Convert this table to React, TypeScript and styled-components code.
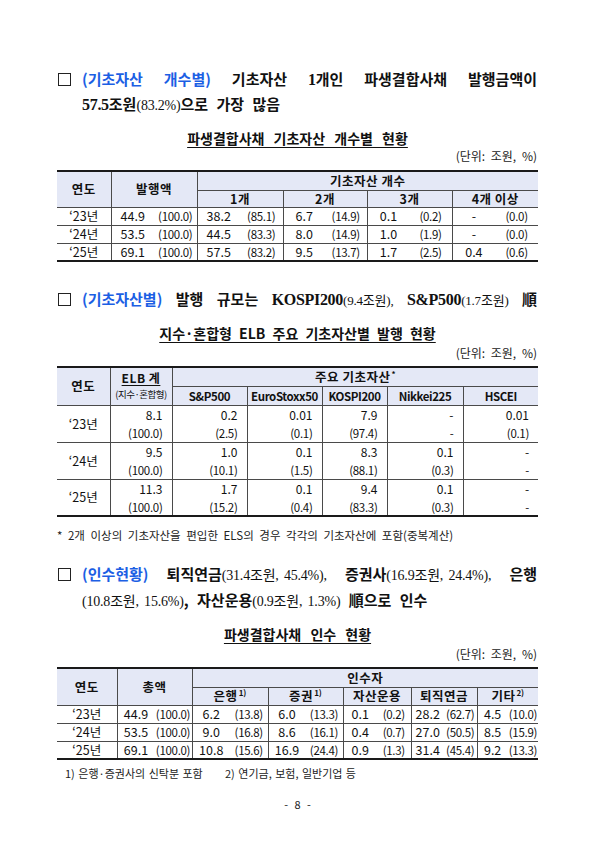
import React from 'react'
import styled, { createGlobalStyle } from 'styled-components'

const GlobalStyle = createGlobalStyle`
  html, body {
    margin: 0;
    padding: 0;
    background: #fff;
  }
  body {
    font-family: 'Noto Sans CJK KR', 'Noto Sans', sans-serif;
    color: #111;
  }
`

const Page = styled.div`
  width: 595px;
  min-height: 841px;
  box-sizing: border-box;
  padding: 0 57px;
  display: flex;
  flex-direction: column;
`

const Heading = styled.div<{ $mt: number; $lh: number }>`
  display: flex;
  margin-top: ${p => p.$mt}px;
  font-size: 15px;
  line-height: ${p => p.$lh}px;
  font-weight: 700;
  color: #111;
`

const BulletBox = styled.div`
  flex: none;
  width: 25px;
`

const Square = styled.span`
  display: inline-block;
  width: 13px;
  height: 13px;
  box-sizing: border-box;
  border: 1.3px solid #222;
  margin-left: 1px;
  vertical-align: -1px;
`

const HeadBody = styled.div`
  flex: 1;
  min-width: 0;
  margin-right: 1px;
`

const JustLine = styled.div`
  text-align: justify;
  text-align-last: justify;
`

const Line = styled.div`
  word-spacing: 5px;
`

const Blue = styled.span`
  color: #1c5fe4;
`

const Latin = styled.span`
  font-family: 'Liberation Serif', serif;
  font-weight: 700;
  font-size: 16px;
  line-height: 1;
  letter-spacing: -0.3px;
`

const Paren = styled.span<{ $s?: number }>`
  font-family: 'Liberation Serif', 'Noto Sans CJK KR', serif;
  font-weight: 400;
  font-size: ${p => p.$s ?? 14}px;
  line-height: 1;
  letter-spacing: -0.2px;
  word-spacing: 2px;
`

const Tight = styled.span`
  display: inline-block;
  white-space: nowrap;
  line-height: 1;
`

const TableTitle = styled.div<{ $mt: number; $ws?: number }>`
  margin-top: ${p => p.$mt}px;
  text-align: center;
  font-size: 14px;
  line-height: 18px;
  font-weight: 700;
  word-spacing: ${p => p.$ws ?? 6}px;
  span {
    text-decoration: underline;
    text-underline-offset: 3px;
    text-decoration-thickness: 1px;
  }
`

const Unit = styled.div<{ $mt: number }>`
  margin-top: ${p => p.$mt}px;
  text-align: right;
  font-size: 12px;
  line-height: 14px;
  word-spacing: 3px;
  color: #222;
  padding-right: 1px;
`

const Grid = styled.table<{ $mt: number }>`
  margin-top: ${p => p.$mt}px;
  width: 481px;
  table-layout: fixed;
  border-collapse: collapse;
  border-top: 2px solid #1a1a1a;
  border-bottom: 2px solid #1a1a1a;
  border-left: hidden;
  border-right: hidden;
  font-size: 12px;
  color: #111;
`

const Col = styled.col<{ $w: number }>`
  width: ${p => p.$w}px;
`

const Row = styled.tr<{ $h: number }>`
  height: ${p => p.$h}px;
`

const Head = styled.th<{ $small?: boolean }>`
  background: #e4e8f6;
  border: 1px solid #4a4a4a;
  padding: 0;
  font-weight: 700;
  font-size: ${p => (p.$small ? 11.5 : 12.5)}px;
  letter-spacing: ${p => (p.$small ? -0.4 : 0.5)}px;
  line-height: 14px;
  text-align: center;
  vertical-align: middle;
`

const Sup = styled.sup`
  font-size: 8px;
  line-height: 0;
  vertical-align: 5px;
  margin-left: 1px;
  letter-spacing: 0;
`

const StackLabel = styled.div`
  display: flex;
  flex-direction: column;
  align-items: center;
  gap: 5px;
`

const MainLabel = styled.span`
  font-size: 12px;
  line-height: 12px;
  text-decoration: underline;
  text-underline-offset: 2px;
`

const SubLabel = styled.span`
  font-size: 9.5px;
  font-weight: 400;
  line-height: 11px;
  letter-spacing: -0.5px;
  white-space: nowrap;
`

const Cell = styled.td<{ $open?: boolean }>`
  border-left: 1px solid #4a4a4a;
  border-right: 1px solid #4a4a4a;
  border-top: ${p => (p.$open ? 'none' : '1px solid #4a4a4a')};
  padding: 0;
  line-height: 14px;
  vertical-align: middle;
`

const YearCell = styled(Cell)`
  text-align: center;
  font-size: 12.5px;
`

const RightCell = styled(Cell)`
  text-align: right;
  padding-right: 9px;
`

const Pair = styled.div`
  display: grid;
  grid-template-columns: 1fr 1fr;
  align-items: center;
`

const Val = styled.span`
  text-align: center;
  font-size: 12.5px;
`

const Pct = styled.span`
  text-align: center;
  font-size: 11.5px;
  letter-spacing: -0.3px;
`

const SmallPct = styled.span`
  font-size: 11.5px;
  letter-spacing: -0.3px;
`

const Footnote = styled.div<{ $mt: number; $pl?: number; $s?: number; $ws?: number }>`
  margin-top: ${p => p.$mt}px;
  padding-left: ${p => p.$pl ?? 0}px;
  font-size: ${p => p.$s ?? 11.5}px;
  line-height: 14px;
  word-spacing: ${p => p.$ws ?? 3}px;
  color: #222;
  display: flex;
`

const NoteItem = styled.span<{ $w?: number }>`
  flex: ${p => (p.$w ? `0 0 ${p.$w}px` : '0 0 auto')};
  white-space: nowrap;
`

const PageNum = styled.div`
  margin-top: 17px;
  text-align: center;
  font-size: 11px;
  line-height: 14px;
  word-spacing: 4px;
  color: #222;
`

type PairRow = { year: string; cells: [string, string][] }

const countRows: PairRow[] = [
  { year: '‘23년', cells: [['44.9', '(100.0)'], ['38.2', '(85.1)'], ['6.7', '(14.9)'], ['0.1', '(0.2)'], ['-', '(0.0)']] },
  { year: '‘24년', cells: [['53.5', '(100.0)'], ['44.5', '(83.3)'], ['8.0', '(14.9)'], ['1.0', '(1.9)'], ['-', '(0.0)']] },
  { year: '‘25년', cells: [['69.1', '(100.0)'], ['57.5', '(83.2)'], ['9.5', '(13.7)'], ['1.7', '(2.5)'], ['0.4', '(0.6)']] },
]

const elbRows: PairRow[] = [
  { year: '‘23년', cells: [['8.1', '(100.0)'], ['0.2', '(2.5)'], ['0.01', '(0.1)'], ['7.9', '(97.4)'], ['-', '-'], ['0.01', '(0.1)']] },
  { year: '‘24년', cells: [['9.5', '(100.0)'], ['1.0', '(10.1)'], ['0.1', '(1.5)'], ['8.3', '(88.1)'], ['0.1', '(0.3)'], ['-', '-']] },
  { year: '‘25년', cells: [['11.3', '(100.0)'], ['1.7', '(15.2)'], ['0.1', '(0.4)'], ['9.4', '(83.3)'], ['0.1', '(0.3)'], ['-', '-']] },
]

const buyerRows: PairRow[] = [
  { year: '‘23년', cells: [['44.9', '(100.0)'], ['6.2', '(13.8)'], ['6.0', '(13.3)'], ['0.1', '(0.2)'], ['28.2', '(62.7)'], ['4.5', '(10.0)']] },
  { year: '‘24년', cells: [['53.5', '(100.0)'], ['9.0', '(16.8)'], ['8.6', '(16.1)'], ['0.4', '(0.7)'], ['27.0', '(50.5)'], ['8.5', '(15.9)']] },
  { year: '‘25년', cells: [['69.1', '(100.0)'], ['10.8', '(15.6)'], ['16.9', '(24.4)'], ['0.9', '(1.3)'], ['31.4', '(45.4)'], ['9.2', '(13.3)']] },
]

function PairRows({ rows }: { rows: PairRow[] }) {
  return (
    <>
      {rows.map(r => (
        <Row $h={18} key={r.year}>
          <YearCell>{r.year}</YearCell>
          {r.cells.map(([v, p], i) => (
            <Cell key={i}>
              <Pair>
                <Val>{v}</Val>
                <Pct>{p}</Pct>
              </Pair>
            </Cell>
          ))}
        </Row>
      ))}
    </>
  )
}

export default function App() {
  return (
    <Page>
      <GlobalStyle />

      <Heading $mt={66} $lh={25}>
        <BulletBox><Square /></BulletBox>
        <HeadBody>
          <JustLine>
            <Blue>(기초자산 개수별)</Blue> 기초자산 <Latin>1</Latin>개인 파생결합사채 발행금액이
          </JustLine>
          <Line>
            <Latin>57.5</Latin>조원<Paren>(83.2%)</Paren>으로 가장 많음
          </Line>
        </HeadBody>
      </Heading>

      <TableTitle $mt={13}><span>파생결합사채 기초자산 개수별 현황</span></TableTitle>
      <Unit $mt={2}>(단위: 조원, %)</Unit>
      <Grid $mt={7}>
        <colgroup>
          {[54, 86, 86, 84, 85, 86].map((w, i) => <Col $w={w} key={i} />)}
        </colgroup>
        <thead>
          <Row $h={19}>
            <Head rowSpan={2}>연도</Head>
            <Head rowSpan={2}>발행액</Head>
            <Head colSpan={4}>기초자산 개수</Head>
          </Row>
          <Row $h={17}>
            <Head>1개</Head>
            <Head>2개</Head>
            <Head>3개</Head>
            <Head>4개 이상</Head>
          </Row>
        </thead>
        <tbody>
          <PairRows rows={countRows} />
        </tbody>
      </Grid>

      <Heading $mt={24} $lh={25}>
        <BulletBox><Square /></BulletBox>
        <HeadBody>
          <JustLine>
            <Blue>(기초자산별)</Blue> 발행 규모는 <Tight><Latin>KOSPI200</Latin><Paren $s={13}>(9.4조원),</Paren></Tight> <Tight><Latin>S&amp;P500</Latin><Paren $s={13}>(1.7조원)</Paren></Tight> 順
          </JustLine>
        </HeadBody>
      </Heading>

      <TableTitle $mt={13} $ws={4}><span>지수·혼합형 ELB 주요 기초자산별 발행 현황</span></TableTitle>
      <Unit $mt={4}>(단위: 조원, %)</Unit>
      <Grid $mt={6}>
        <colgroup>
          {[53, 62, 75, 75, 65, 76, 75].map((w, i) => <Col $w={w} key={i} />)}
        </colgroup>
        <thead>
          <Row $h={19}>
            <Head rowSpan={2}>연도</Head>
            <Head rowSpan={2}>
              <StackLabel>
                <MainLabel>ELB 계</MainLabel>
                <SubLabel>(지수·혼합형)</SubLabel>
              </StackLabel>
            </Head>
            <Head colSpan={5}>주요 기초자산<Sup>*</Sup></Head>
          </Row>
          <Row $h={19}>
            <Head $small>S&amp;P500</Head>
            <Head $small>EuroStoxx50</Head>
            <Head $small>KOSPI200</Head>
            <Head $small>Nikkei225</Head>
            <Head $small>HSCEI</Head>
          </Row>
        </thead>
        <tbody>
          {elbRows.map(r => (
            <React.Fragment key={r.year}>
              <Row $h={19}>
                <YearCell rowSpan={2}>{r.year}</YearCell>
                {r.cells.map(([v], i) => <RightCell key={i}>{v}</RightCell>)}
              </Row>
              <Row $h={18}>
                {r.cells.map(([, p], i) => (
                  <RightCell $open key={i}><SmallPct>{p}</SmallPct></RightCell>
                ))}
              </Row>
            </React.Fragment>
          ))}
        </tbody>
      </Grid>
      <Footnote $mt={11}>* 2개 이상의 기초자산을 편입한 ELS의 경우 각각의 기초자산에 포함(중복계산)</Footnote>

      <Heading $mt={19} $lh={26}>
        <BulletBox><Square /></BulletBox>
        <HeadBody>
          <JustLine>
            <Blue>(인수현황)</Blue> <Tight>퇴직연금<Paren>(31.4조원, 45.4%),</Paren></Tight> <Tight>증권사<Paren>(16.9조원, 24.4%),</Paren></Tight> 은행
          </JustLine>
          <Line>
            <Paren>(10.8조원, 15.6%)</Paren>, 자산운용<Paren>(0.9조원, 1.3%)</Paren> 順으로 인수
          </Line>
        </HeadBody>
      </Heading>

      <TableTitle $mt={12}><span>파생결합사채 인수 현황</span></TableTitle>
      <Unit $mt={4}>(단위: 조원, %)</Unit>
      <Grid $mt={6}>
        <colgroup>
          {[60, 75, 76, 75, 68, 66, 61].map((w, i) => <Col $w={w} key={i} />)}
        </colgroup>
        <thead>
          <Row $h={19}>
            <Head rowSpan={2}>연도</Head>
            <Head rowSpan={2}>총액</Head>
            <Head colSpan={5}>인수자</Head>
          </Row>
          <Row $h={18}>
            <Head>은행<Sup>1)</Sup></Head>
            <Head>증권<Sup>1)</Sup></Head>
            <Head>자산운용</Head>
            <Head>퇴직연금</Head>
            <Head>기타<Sup>2)</Sup></Head>
          </Row>
        </thead>
        <tbody>
          <PairRows rows={buyerRows} />
        </tbody>
      </Grid>
      <Footnote $mt={6} $pl={8} $s={11} $ws={1}>
        <NoteItem $w={160}>1) 은행·증권사의 신탁분 포함</NoteItem>
        <NoteItem>2) 연기금, 보험, 일반기업 등</NoteItem>
      </Footnote>

      <PageNum>- 8 -</PageNum>
    </Page>
  )
}
